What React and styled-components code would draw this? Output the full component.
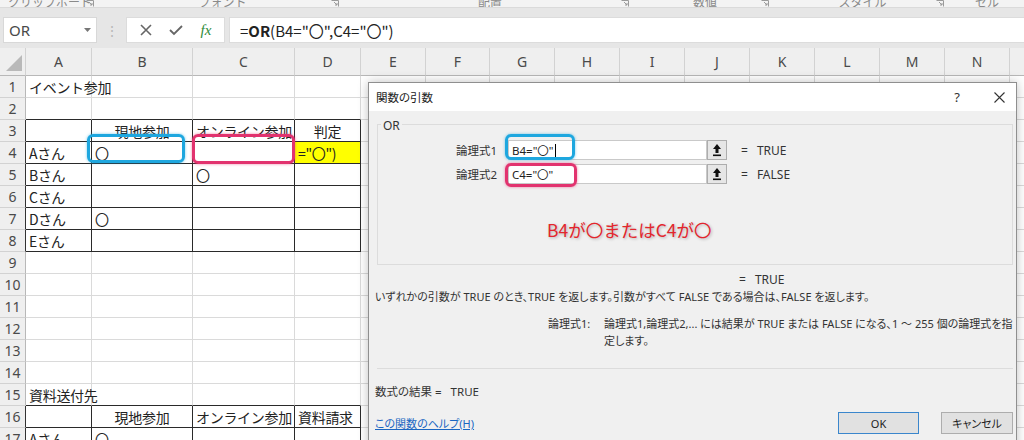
import React from 'react';
import styled, { createGlobalStyle } from 'styled-components';

const GlobalStyle = createGlobalStyle`
  html, body {
    margin: 0;
    padding: 0;
    width: 1024px;
    height: 440px;
    overflow: hidden;
    background: #ffffff;
  }
  body {
    font-family: "Noto Sans CJK JP", "Noto Sans", sans-serif;
  }
`;

const COLS = ['A', 'B', 'C', 'D', 'E', 'F', 'G', 'H', 'I', 'J', 'K', 'L', 'M', 'N', 'O'];
const WIDTHS = [66, 101, 102, 66, 65, 64, 65, 65, 65, 65, 65, 65, 65, 65, 60];
const ROWS = Array.from({ length: 17 }, (_, i) => i + 1);

const DATA = {
  1: { A: 'イベント参加' },
  3: { B: ['現地参加', 'center'], C: 'オンライン参加', D: ['判定', 'center'] },
  4: { A: 'Aさん', B: '〇', D: '="〇")' },
  5: { A: 'Bさん', C: '〇' },
  6: { A: 'Cさん' },
  7: { A: 'Dさん', B: '〇' },
  8: { A: 'Eさん' },
  15: { A: '資料送付先' },
  16: { B: ['現地参加', 'center'], C: 'オンライン参加', D: '資料請求' },
  17: { A: 'Aさん', B: '〇' },
};

const inTable = (r) => (r >= 3 && r <= 8) || r >= 16;

const RIBBON = [
  { w: 100, label: 'クリップボード' },
  { w: 245, label: 'フォント' },
  { w: 290, label: '配置' },
  { w: 140, label: '数値' },
  { w: 175, label: 'スタイル' },
  { w: 74, label: 'セル', last: true },
];

const Page = styled.div`
  position: relative;
  width: 1024px;
  height: 440px;
  overflow: hidden;
  background: #fff;
`;

/* ribbon strip, only the bottom edge is visible */
const Ribbon = styled.div`
  height: 7px;
  overflow: hidden;
  display: flex;
  background: #f3f3f3;
  border-bottom: 1px solid #dadada;
`;

const RibbonGroup = styled.div`
  width: ${(p) => p.$w}px;
  flex: none;
  position: relative;
  display: flex;
  justify-content: center;
  align-items: flex-end;
  span {
    font-size: 12px;
    line-height: 14px;
    margin-bottom: -2px;
    color: #8a8a8a;
  }
  svg {
    position: absolute;
    right: 6px;
    bottom: 0;
  }
`;

const FormulaBar = styled.div`
  height: 40px;
  box-sizing: border-box;
  padding: 9px 0 0 3px;
  background: #e6e6e6;
  display: flex;
  align-items: flex-start;
`;

const NameBox = styled.div`
  width: 94px;
  height: 26px;
  box-sizing: border-box;
  background: #fff;
  border: 1px solid #d8d8d8;
  display: flex;
  align-items: center;
  justify-content: space-between;
  padding: 0 5px 0 5px;
  font-family: "Noto Sans", sans-serif;
  font-size: 15px;
  color: #4a4a4a;
`;

const Dots = styled.div`
  width: 29px;
  height: 26px;
  display: flex;
  align-items: center;
  justify-content: center;
  color: #b8b8b8;
  font-size: 14px;
`;

const FxButtons = styled.div`
  width: 99px;
  height: 26px;
  box-sizing: border-box;
  background: #fff;
  border: 1px solid #dcdcdc;
  display: flex;
  align-items: center;
  justify-content: space-around;
  padding: 0 4px;
  margin-right: 4px;
`;

const Fx = styled.span`
  font-family: "Liberation Serif", serif;
  font-style: italic;
  font-size: 15px;
  color: #2e8b3a;
`;

const FormulaInput = styled.div`
  flex: 1;
  height: 26px;
  box-sizing: border-box;
  background: #fff;
  border: 1px solid #dcdcdc;
  border-right: none;
  display: flex;
  align-items: center;
  padding-left: 10px;
  font-size: 15px;
  color: #222;
  b {
    font-weight: 700;
  }
`;

const Grid = styled.div`
  display: grid;
  grid-template-columns: 26px ${WIDTHS.map((w) => w + 'px').join(' ')};
  grid-template-rows: 28px;
  grid-auto-rows: 22px;
`;

const ColHead = styled.div`
  box-sizing: border-box;
  background: #efefef;
  border-right: 1px solid #d2d2d2;
  border-bottom: 1px solid #b8b8b8;
  display: flex;
  align-items: center;
  justify-content: center;
  font-family: "Noto Sans", sans-serif;
  font-size: 14px;
  color: #4a4a4a;
  position: relative;
`;

const RowHead = styled.div`
  box-sizing: border-box;
  background: #efefef;
  border-right: 1px solid ${(p) => (p.$dark ? '#333' : '#b8b8b8')};
  border-bottom: 1px solid #d2d2d2;
  display: flex;
  align-items: center;
  justify-content: center;
  font-family: "Noto Sans", sans-serif;
  font-size: 14px;
  color: #4a4a4a;
`;

const Cell = styled.div`
  box-sizing: border-box;
  border-right: 1px solid ${(p) => (p.$br ? '#2a2a2a' : '#dadada')};
  border-bottom: 1px solid ${(p) => (p.$bb ? '#2a2a2a' : '#dadada')};
  background: ${(p) => p.$bg || 'transparent'};
  padding: 0 3px;
  display: flex;
  align-items: center;
  justify-content: ${(p) => (p.$center ? 'center' : 'flex-start')};
  white-space: nowrap;
  font-size: 14px;
  letter-spacing: -0.3px;
  color: #222;
  position: ${(p) => (p.$mark ? 'relative' : 'static')};
`;

const Mark = styled.span`
  position: absolute;
  left: ${(p) => p.$l}px;
  top: ${(p) => p.$t}px;
  width: ${(p) => p.$w}px;
  height: ${(p) => p.$h}px;
  box-sizing: border-box;
  border: 3px solid ${(p) => p.$c};
  border-radius: 6px;
  box-shadow: 0 0 3px ${(p) => p.$c}99;
  pointer-events: none;
`;

const BLUE = '#1ea7df';
const PINK = '#e2336f';

/* dialog */
const Dialog = styled.div`
  position: absolute;
  left: 368px;
  top: 82px;
  width: 649px;
  height: 372px;
  box-sizing: border-box;
  background: #f0f0f0;
  border: 1px solid #8f8f8f;
  box-shadow: 0 0 10px rgba(0, 0, 0, 0.25);
  font-family: "Noto Sans", "Noto Sans CJK JP", sans-serif;
  font-size: 11px;
  color: #333;
  font-feature-settings: "palt";
`;

const TitleBar = styled.div`
  height: 28px;
  background: #fff;
  display: flex;
  align-items: center;
  padding-left: 7px;
`;

const Title = styled.div`
  flex: 1;
  color: #222;
  font-size: 11.5px;
`;

const TitleButton = styled.div`
  width: ${(p) => p.$w}px;
  height: 28px;
  display: flex;
  align-items: center;
  justify-content: center;
  color: #333;
  font-size: 13px;
`;

const GroupBox = styled.div`
  position: relative;
  margin: 13px 3px 0 8px;
  height: 141px;
  box-sizing: border-box;
  border: 1px solid #dcdcdc;
  padding-top: 15px;
`;

const Legend = styled.span`
  position: absolute;
  left: 3px;
  top: -8px;
  padding: 0 2px;
  background: #f0f0f0;
  color: #333;
  font-size: 12px;
`;

const ArgRow = styled.div`
  display: flex;
  align-items: center;
  height: 20px;
  margin-bottom: 4px;
`;

const ArgLabel = styled.div`
  width: 119px;
  text-align: right;
  margin-right: 11px;
  font-size: 11.5px;
`;

const ArgInput = styled.div`
  position: relative;
  width: 199px;
  height: 20px;
  box-sizing: border-box;
  background: #fff;
  border: 1px solid #c9c9c9;
  display: flex;
  align-items: center;
  padding-left: 3px;
  color: #222;
  font-size: 11.5px;
`;

const Caret = styled.span`
  display: inline-block;
  width: 1px;
  height: 13px;
  background: #000;
  margin-left: 1px;
`;

const RefButton = styled.div`
  width: 20px;
  height: 20px;
  box-sizing: border-box;
  background: #e6e6e6;
  border: 1px solid #adadad;
  display: flex;
  align-items: center;
  justify-content: center;
`;

const ArgValue = styled.div`
  margin-left: 14px;
  display: flex;
  gap: 9px;
  color: #333;
  font-size: 12px;
`;

const Annotation = styled.div`
  margin: 34px 0 0 169px;
  font-family: "Noto Sans CJK JP", sans-serif;
  font-size: 17.5px;
  line-height: 24px;
  color: #e3262d;
  text-shadow: 1px 1px 3px rgba(0, 0, 0, 0.28);
  font-feature-settings: normal;
`;

const Line = styled.div`
  padding-left: ${(p) => p.$pl}px;
  margin-top: ${(p) => p.$mt || 0}px;
  line-height: 17px;
  white-space: nowrap;
  display: flex;
  gap: ${(p) => p.$gap || 0}px;
  font-size: ${(p) => p.$fs || 11}px;
`;

const ArgHelp = styled.div`
  display: grid;
  grid-template-columns: 56px 412px;
  padding-left: 179px;
  margin-top: 10px;
  line-height: 17px;
`;

const Separator = styled.div`
  margin: 19px 3px 0 8px;
  border-top: 1px solid #dcdcdc;
`;

const Footer = styled.div`
  display: flex;
  align-items: center;
  margin-top: 12px;
  padding: 0 3px 0 6px;
`;

const HelpLink = styled.a`
  flex: 1;
  color: #1a66c2;
  text-decoration: underline;
`;

const Button = styled.div`
  width: ${(p) => p.$w}px;
  height: 22px;
  box-sizing: border-box;
  background: #e1e1e1;
  border: 1px solid ${(p) => (p.$primary ? '#3a86cc' : '#adadad')};
  display: flex;
  align-items: center;
  justify-content: center;
  margin-left: ${(p) => p.$ml || 0}px;
  color: #222;
`;

const Launcher = () => (
  <svg width="8" height="7" viewBox="0 0 8 7">
    <path d="M0.5 0.5 H7.5 V6.5" fill="none" stroke="#9a9a9a" />
    <path d="M3 2 L6 5 M6 3 V5 H4" fill="none" stroke="#9a9a9a" />
  </svg>
);

const UpIcon = () => (
  <svg width="10" height="14" viewBox="0 0 10 14">
    <path d="M5 1 L9 6 H6.5 V10 H3.5 V6 H1 Z" fill="#111" />
    <rect x="1" y="11.5" width="8" height="1.6" fill="#111" />
  </svg>
);

const Sheet = () => (
  <Grid>
    <ColHead>
      <svg width="18" height="18" viewBox="0 0 18 18" style={{ position: 'absolute', right: 2, bottom: 3 }}>
        <path d="M17 1 V17 H1 Z" fill="#b9b9b9" />
      </svg>
    </ColHead>
    {COLS.map((c) => (
      <ColHead key={c}>{c}</ColHead>
    ))}
    {ROWS.map((r) => (
      <React.Fragment key={r}>
        <RowHead $dark={inTable(r)}>{r}</RowHead>
        {COLS.map((c, ci) => {
          const raw = DATA[r] && DATA[r][c];
          const text = Array.isArray(raw) ? raw[0] : raw;
          const center = Array.isArray(raw) && raw[1] === 'center';
          const tableCol = ci < 4;
          const br = tableCol && inTable(r);
          const bb = tableCol && (inTable(r) || inTable(r + 1));
          const bg = r === 4 && c === 'D' ? '#ffff00' : undefined;
          const mark = r === 4 && (c === 'B' || c === 'C');
          return (
            <Cell key={c} $br={br} $bb={bb} $bg={bg} $center={center} $mark={mark}>
              {text}
              {r === 4 && c === 'B' && <Mark $c={BLUE} $l={-5} $t={-8} $w={98} $h={29} />}
              {r === 4 && c === 'C' && <Mark $c={PINK} $l={-1} $t={-8} $w={103} $h={30} />}
            </Cell>
          );
        })}
      </React.Fragment>
    ))}
  </Grid>
);

const FunctionDialog = () => (
  <Dialog>
    <TitleBar>
      <Title>関数の引数</Title>
      <TitleButton $w={50}>?</TitleButton>
      <TitleButton $w={34}>
        <svg width="11" height="11" viewBox="0 0 11 11">
          <path d="M0.5 0.5 L10.5 10.5 M10.5 0.5 L0.5 10.5" stroke="#333" strokeWidth="1.1" />
        </svg>
      </TitleButton>
    </TitleBar>
    <GroupBox>
      <Legend>OR</Legend>
      <ArgRow>
        <ArgLabel>論理式1</ArgLabel>
        <ArgInput>
          B4="〇"<Caret />
          <Mark $c={BLUE} $l={-4} $t={-7} $w={70} $h={26} />
        </ArgInput>
        <RefButton>
          <UpIcon />
        </RefButton>
        <ArgValue>
          <span>=</span>
          <span>TRUE</span>
        </ArgValue>
      </ArgRow>
      <ArgRow>
        <ArgLabel>論理式2</ArgLabel>
        <ArgInput>
          C4="〇"
          <Mark $c={PINK} $l={-4} $t={-2} $w={72} $h={24} />
        </ArgInput>
        <RefButton>
          <UpIcon />
        </RefButton>
        <ArgValue>
          <span>=</span>
          <span>FALSE</span>
        </ArgValue>
      </ArgRow>
      <Annotation>B4が〇またはC4が〇</Annotation>
    </GroupBox>
    <Line $pl={370} $mt={6} $gap={9} $fs={12}>
      <span>=</span>
      <span>TRUE</span>
    </Line>
    <Line $pl={6}>いずれかの引数が TRUE のとき、TRUE を返します。引数がすべて FALSE である場合は、FALSE を返します。</Line>
    <ArgHelp>
      <span>論理式1:</span>
      <span>論理式1,論理式2,... には結果が TRUE または FALSE になる、1 ～ 255 個の論理式を指定します。</span>
    </ArgHelp>
    <Separator />
    <Line $pl={6} $mt={14} $fs={11.5}>数式の結果 =&nbsp;&nbsp;&nbsp;TRUE</Line>
    <Footer>
      <HelpLink>この関数のヘルプ(H)</HelpLink>
      <Button $w={81} $primary>OK</Button>
      <Button $w={72} $ml={22}>キャンセル</Button>
    </Footer>
  </Dialog>
);

const App = () => (
  <Page>
    <GlobalStyle />
    <Ribbon>
      {RIBBON.map((g) => (
        <RibbonGroup key={g.label} $w={g.w}>
          <span>{g.label}</span>
          {!g.last && <Launcher />}
        </RibbonGroup>
      ))}
    </Ribbon>
    <FormulaBar>
      <NameBox>
        <span>OR</span>
        <svg width="7" height="4" viewBox="0 0 7 4">
          <path d="M0 0 H7 L3.5 4 Z" fill="#777" />
        </svg>
      </NameBox>
      <Dots>⋮</Dots>
      <FxButtons>
        <svg width="12" height="12" viewBox="0 0 12 12">
          <path d="M1 1 L11 11 M11 1 L1 11" stroke="#666" strokeWidth="1.6" />
        </svg>
        <svg width="14" height="12" viewBox="0 0 14 12">
          <path d="M1 6 L5 10 L13 2" fill="none" stroke="#666" strokeWidth="1.8" />
        </svg>
        <Fx>fx</Fx>
      </FxButtons>
      <FormulaInput>
        =<b>OR</b>(B4="〇",C4="〇")
      </FormulaInput>
    </FormulaBar>
    <Sheet />
    <FunctionDialog />
  </Page>
);

export default App;
